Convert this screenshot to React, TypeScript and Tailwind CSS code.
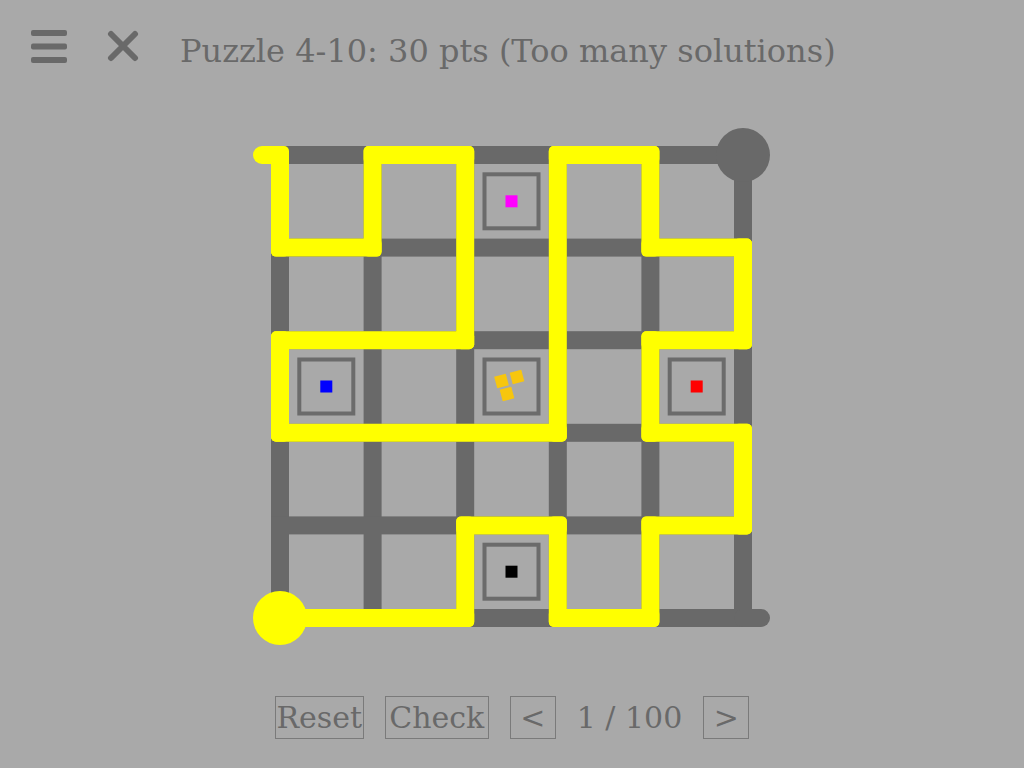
const S = 92.6
const O = 48
const W = 18
const GRID = '#696969'
const PATH = '#ffff00'

const px = (i: number) => O + i * S

// vertices of the drawn line, in grid coordinates (col, row)
const trail: [number, number][] = [
  [0, 5], [2, 5], [2, 4], [3, 4], [3, 5], [4, 5], [4, 4], [5, 4], [5, 3], [4, 3],
  [4, 2], [5, 2], [5, 1], [4, 1], [4, 0], [3, 0], [3, 3], [0, 3], [0, 2], [2, 2],
  [2, 0], [1, 0], [1, 1], [0, 1], [0, 0],
]

function Segment({ a, b, color, r = 5 }: { a: [number, number]; b: [number, number]; color: string; r?: number }) {
  const x1 = Math.min(px(a[0]), px(b[0])) - W / 2
  const x2 = Math.max(px(a[0]), px(b[0])) + W / 2
  const y1 = Math.min(px(a[1]), px(b[1])) - W / 2
  const y2 = Math.max(px(a[1]), px(b[1])) + W / 2
  return <rect x={x1} y={y1} width={x2 - x1} height={y2 - y1} rx={r} fill={color} />
}

const cellC = (i: number) => O + i * S + S / 2

function Box({ c, r, children }: { c: number; r: number; children?: React.ReactNode }) {
  const cx = cellC(c)
  const cy = cellC(r)
  return (
    <g>
      <rect x={cx - 27} y={cy - 27} width={54} height={54} fill="none" stroke="#6b6b6b" strokeWidth={4} />
      {children}
    </g>
  )
}

function Dot({ c, r, color }: { c: number; r: number; color: string }) {
  return (
    <Box c={c} r={r}>
      <rect x={cellC(c) - 6} y={cellC(r) - 6} width={12} height={12} fill={color} />
    </Box>
  )
}

function Puzzle() {
  const cx = cellC(2)
  const cy = cellC(2)
  const blocks = [
    [-10, -5.5],
    [5.5, -9.5],
    [-4.5, 7.5],
  ]
  return (
    <svg width={560} height={560} viewBox="0 0 560 560" className="block">
      {/* grid */}
      {[0, 1, 2, 3, 4, 5].map((j) => (
        <g key={j}>
          <Segment a={[0, j]} b={[5, j]} color={GRID} r={0} />
          <Segment a={[j, 0]} b={[j, 5]} color={GRID} r={0} />
        </g>
      ))}
      <line x1={px(5)} y1={px(5)} x2={px(5) + 18} y2={px(5)} stroke={GRID} strokeWidth={W} strokeLinecap="round" />
      <circle cx={px(5)} cy={px(0)} r={27} fill={GRID} />

      {/* symbols */}
      <Dot c={2} r={0} color="#ff00ff" />
      <Dot c={0} r={2} color="#0000ff" />
      <Dot c={4} r={2} color="#ff0000" />
      <Dot c={2} r={4} color="#000000" />
      <Box c={2} r={2}>
        {blocks.map(([dx, dy], k) => (
          <rect
            key={k}
            x={cx + dx - 6}
            y={cy + dy - 6}
            width={12}
            height={12}
            fill="#f7c60e"
            transform={`rotate(-15 ${cx + dx} ${cy + dy})`}
          />
        ))}
      </Box>

      {/* solution line */}
      {trail.slice(1).map((v, k) => (
        <Segment key={k} a={trail[k]} b={v} color={PATH} />
      ))}
      <line x1={px(0)} y1={px(0)} x2={px(0) - 18} y2={px(0)} stroke={PATH} strokeWidth={W} strokeLinecap="round" />
      <circle cx={px(0)} cy={px(5)} r={27} fill={PATH} />
    </svg>
  )
}

export default function App() {
  const serif = { fontFamily: '"DejaVu Serif", "Liberation Serif", serif' }
  return (
    <div className="w-[1024px] h-[768px] bg-[#a9a9a9] text-[#696969] overflow-hidden" style={serif}>
      <header className="h-[107px] flex items-start pt-[30px] pl-[31px]">
        <svg width={36} height={33} viewBox="0 0 36 33" className="shrink-0">
          <rect x={0} y={0} width={36} height={6} rx={2} fill="#696969" />
          <rect x={0} y={13.5} width={36} height={6} rx={2} fill="#696969" />
          <rect x={0} y={27} width={36} height={6} rx={2} fill="#696969" />
        </svg>
        <svg width={32} height={32} viewBox="0 0 32 32" className="shrink-0 ml-[40px]">
          <path d="M4 4 L28 28 M28 4 L4 28" stroke="#696969" strokeWidth={6} strokeLinecap="round" />
        </svg>
        <h1 className="ml-[41px] mt-[1px] text-[32px] leading-[40px] whitespace-nowrap">
          Puzzle 4-10: 30 pts (Too many solutions)
        </h1>
      </header>

      <div className="flex justify-center">
        <Puzzle />
      </div>

      <div className="flex justify-center items-center gap-[21px] mt-[29px]">
        <button className="w-[89px] h-[43px] border border-[#7a7a7a] text-[30px] leading-none">Reset</button>
        <button className="w-[104px] h-[43px] border border-[#7a7a7a] text-[30px] leading-none">Check</button>
        <button className="w-[46px] h-[43px] border border-[#7a7a7a] text-[30px] leading-none">&lt;</button>
        <span className="text-[30px] leading-none">1 / 100</span>
        <button className="w-[46px] h-[43px] border border-[#7a7a7a] text-[30px] leading-none">&gt;</button>
      </div>
    </div>
  )
}
